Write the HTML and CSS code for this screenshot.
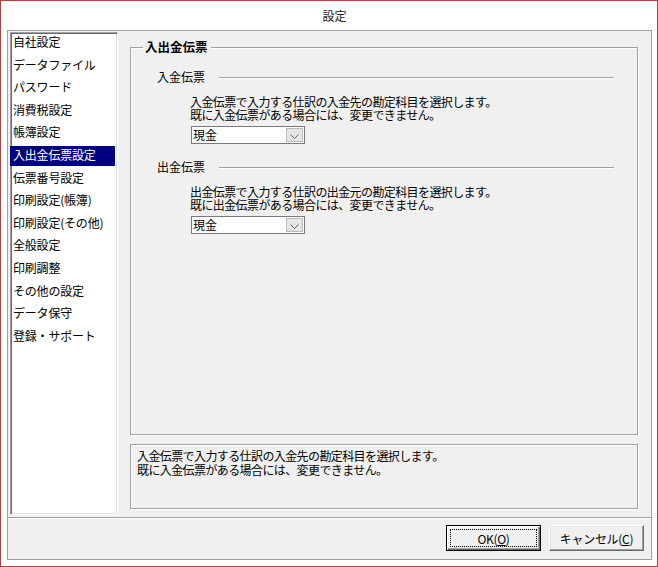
FILE: index.html
```html
<!DOCTYPE html>
<html lang="ja">
<head>
<meta charset="utf-8">
<title>設定</title>
<link rel="stylesheet" href="styles.css">
</head>
<body>
<div class="window">
  <div class="titlebar">設定</div>
  <div class="panel">
    <div class="top">
      <ul class="list">
        <li class="item">自社設定</li>
        <li class="item">データファイル</li>
        <li class="item">パスワード</li>
        <li class="item">消費税設定</li>
        <li class="item">帳簿設定</li>
        <li class="item selected">入出金伝票設定</li>
        <li class="item">伝票番号設定</li>
        <li class="item">印刷設定(帳簿)</li>
        <li class="item">印刷設定(その他)</li>
        <li class="item">全般設定</li>
        <li class="item">印刷調整</li>
        <li class="item">その他の設定</li>
        <li class="item">データ保守</li>
        <li class="item">登録・サポート</li>
      </ul>
      <div class="main">
        <div class="group">
          <div class="group-title">入出金伝票</div>
          <div class="section">
            <div class="section-head">
              <span class="section-label">入金伝票</span>
              <span class="section-line"></span>
            </div>
            <p class="desc">入金伝票で入力する仕訳の入金先の勘定科目を選択します。<br>既に入金伝票がある場合には、変更できません。</p>
            <div class="combo">
              <span class="combo-text">現金</span>
              <span class="combo-btn"><svg width="9" height="5" viewBox="0 0 9 5"><path d="M0.5 0.5 L4.5 4.5 L8.5 0.5" fill="none" stroke="#606060" stroke-width="1"/></svg></span>
            </div>
          </div>
          <div class="section">
            <div class="section-head">
              <span class="section-label">出金伝票</span>
              <span class="section-line"></span>
            </div>
            <p class="desc">出金伝票で入力する仕訳の出金元の勘定科目を選択します。<br>既に出金伝票がある場合には、変更できません。</p>
            <div class="combo">
              <span class="combo-text">現金</span>
              <span class="combo-btn"><svg width="9" height="5" viewBox="0 0 9 5"><path d="M0.5 0.5 L4.5 4.5 L8.5 0.5" fill="none" stroke="#606060" stroke-width="1"/></svg></span>
            </div>
          </div>
        </div>
        <div class="help">入金伝票で入力する仕訳の入金先の勘定科目を選択します。<br>既に入金伝票がある場合には、変更できません。</div>
      </div>
    </div>
    <div class="buttons">
      <button class="btn btn-default"><span class="focus">OK(<u>O</u>)</span></button>
      <button class="btn">キャンセル(<u>C</u>)</button>
    </div>
  </div>
</div>
</body>
</html>
```
FILE: styles.css
```css
* { box-sizing: border-box; }
html, body { margin: 0; padding: 0; background: #fff; }
body {
  font-family: "Noto Sans CJK JP", "Noto Sans", sans-serif;
  font-size: 12px;
  color: #000;
}
.window {
  width: 658px;
  height: 567px;
  border: 1px solid #b3403e;
  background: #fff;
  display: flex;
  flex-direction: column;
}
.titlebar {
  height: 30px;
  line-height: 30px;
  text-align: center;
  padding-left: 11px;
  font-size: 12px;
  color: #222;
  margin-bottom: -1px;
}
.panel {
  flex: 1;
  margin: 0 5px 6px 6px;
  border: 1px solid #a0a0a0;
  background: #f0f0f0;
  display: flex;
  flex-direction: column;
}
.top {
  height: 486px;
  display: flex;
  align-items: flex-start;
}
.list {
  list-style: none;
  margin: 1px 0 0 2px;
  padding: 0;
  width: 108px;
  height: 483px;
  background: #fff;
  border: 1px solid;
  border-color: #a0a0a0 #fff #fff #a0a0a0;
  box-shadow: inset 1px 1px 0 #696969, inset -1px -1px 0 #e3e3e3;
}
.item {
  height: 20px;
  line-height: 18px;
  margin: 0 2px 2.6px 0;
  padding-left: 2px;
  white-space: nowrap;
  letter-spacing: -0.2px;
}
.item.selected {
  background: #000080;
  color: #fff;
  margin-left: -1px;
  padding-left: 3px;
}
.main {
  margin-left: 12px;
  width: 508px;
  display: flex;
  flex-direction: column;
}
.group {
  margin-top: 16px;
  height: 388px;
  border: 1px solid #a0a0a0;
  box-shadow: inset 1px 1px 0 #fff, 1px 1px 0 #fff;
  padding: 0 23px 0 26px;
}
.group-title {
  display: table;
  margin: -8px 0 0 -14px;
  padding: 0 3px 0 2px;
  background: #f0f0f0;
  line-height: 14px;
  font-weight: bold;
  font-size: 12.5px;
}
.section { margin-top: 16px; }
.section-head {
  display: flex;
  align-items: center;
  height: 14px;
}
.section-label {
  line-height: 14px;
  margin-right: 14px;
}
.section-line {
  flex: 1;
  border-top: 1px solid #a0a0a0;
  border-bottom: 1px solid #fff;
  margin-top: 2px;
}
.desc {
  margin: 11px 0 0 33px;
  line-height: 13px;
  letter-spacing: -0.6px;
}
.combo {
  margin: 5px 0 0 34px;
  width: 114px;
  height: 18px;
  border: 1px solid #7a7a7a;
  background: #fff;
  display: flex;
  align-items: stretch;
}
.combo-text {
  flex: 1;
  line-height: 16px;
  padding-left: 1px;
}
.combo-btn {
  width: 17px;
  margin: 1px;
  background: #e6e6e6;
  border: 1px solid #b9b9b9;
  display: flex;
  align-items: center;
  justify-content: center;
  padding-top: 2px;
}
.help {
  margin-top: 9px;
  height: 65px;
  border: 1px solid #a0a0a0;
  box-shadow: inset 1px 1px 0 #fff, 1px 1px 0 #fff;
  padding: 4px 6px;
  line-height: 14px;
  letter-spacing: -0.6px;
}
.buttons {
  flex: 1;
  border-top: 1px solid #a0a0a0;
  box-shadow: inset 0 1px 0 #fff;
  display: flex;
  justify-content: flex-end;
  align-items: flex-start;
  gap: 8px;
  padding: 7px 7px 0 0;
}
.btn {
  width: 95px;
  height: 26px;
  font-family: inherit;
  font-size: 12px;
  color: #000;
  background: #f0f0f0;
  border: 1px solid;
  border-color: #fff #696969 #696969 #fff;
  box-shadow: inset -1px -1px 0 #a0a0a0, inset 1px 1px 0 #e3e3e3;
  padding: 0;
  display: flex;
  align-items: center;
  justify-content: center;
  letter-spacing: -0.3px;
}
.btn-default {
  border: 1px solid #000;
  box-shadow: inset 1px 1px 0 #fff, inset -1px -1px 0 #696969, inset -2px -2px 0 #a0a0a0;
  padding: 3px;
}
.focus {
  flex: 1;
  align-self: stretch;
  border: 1px dotted #000;
  display: flex;
  align-items: center;
  justify-content: center;
}
u { text-decoration: underline; text-underline-offset: 1px; }
```
